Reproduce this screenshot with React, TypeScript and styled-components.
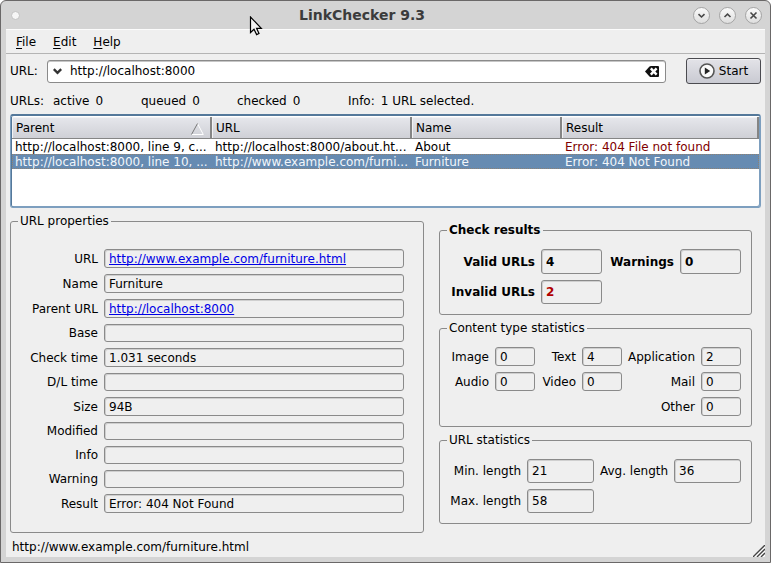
import React from "react";
import styled, { createGlobalStyle, css } from "styled-components";

const line = "#8a8a8a";

const GlobalStyle = createGlobalStyle`
  * { box-sizing: border-box; }
  body {
    margin: 0;
    background: #fff;
    color: #000;
    font: 12px/15px "DejaVu Sans", Verdana, sans-serif;
  }
  input, button { font: inherit; color: inherit; }
`;

const Window = styled.div`
  display: flex;
  flex-direction: column;
  min-height: 100vh;
  padding: 0 5px 5px;
  border: 1px solid #6a6868;
  border-radius: 6px 6px 0 0;
  background: #d4d4d4;
`;

const TitleBar = styled.header`
  display: grid;
  grid-template-columns: 20px 1fr auto;
  align-items: center;
  height: 28px;
  padding: 0 3px 0 5px;
`;

const Title = styled.h1`
  margin: 0;
  color: #3c3c3c;
  font-size: 14px;
  line-height: 17px;
  text-align: center;
`;

const Dot = styled.span`
  width: 9px;
  height: 9px;
  border: 1px solid #c2c2c2;
  border-radius: 50%;
  background: #f6f6f6;
`;

const WindowButtons = styled.div`
  display: flex;
  justify-content: flex-end;
  gap: 9px;
`;

const RoundButton = styled.button`
  display: grid;
  place-items: center;
  width: 17px;
  height: 17px;
  padding: 0;
  border: 1px solid #a4a4a4;
  border-radius: 50%;
  background: linear-gradient(#fafafa, #dedede);
`;

const Content = styled.main`
  display: flex;
  flex: 1;
  flex-direction: column;
  background: #efefef;
`;

const MenuBar = styled.nav`
  display: flex;
  gap: 17px;
  height: 25px;
  padding: 1px 10px 0;
  border-top: 1px solid #fcfcfc;
  border-bottom: 1px solid #b4b4b4;
`;

const MenuItem = styled.button`
  padding: 0;
  border: 0;
  background: none;

  &::first-letter {
    text-decoration: underline;
    text-underline-offset: 2px;
  }
`;

const UrlBar = styled.form`
  display: flex;
  align-items: center;
  padding: 4px 4px 0;
`;

const UrlLabel = styled.label`
  width: 37px;
`;

const Combo = styled.div`
  display: flex;
  flex: 1;
  align-items: center;
  height: 23px;
  margin-right: 20px;
  padding: 0 5px;
  border: 1px solid ${line};
  border-radius: 3px;
  background: #fff;
  box-shadow: inset 0 1px #c6c6c6;
`;

const ComboInput = styled.input`
  flex: 1;
  min-width: 0;
  padding: 0 8px;
  border: 0;
  outline: 0;
  background: none;
`;

const IconButton = styled.button`
  display: flex;
  padding: 0;
  border: 0;
  background: none;
`;

const StartButton = styled.button`
  display: flex;
  align-items: center;
  justify-content: center;
  gap: 4px;
  width: 75px;
  height: 26px;
  padding: 0;
  border: 1px solid #4b4b50;
  border-radius: 3px;
  background: linear-gradient(#e3e3e8, #c9cad2);
  box-shadow: inset 0 1px #f1f1f4;
`;

const Counters = styled.div`
  display: flex;
  padding: 10px 4px 5px;
`;

const Counter = styled.span<{ $width?: number }>`
  display: flex;
  gap: 6px;
  width: ${(p) => (p.$width ? `${p.$width}px` : "auto")};
  white-space: nowrap;
`;

const ResultList = styled.div`
  height: 94px;
  margin: 0 4px;
  padding-top: 1px;
  border: 1px solid #7d9fbf;
  border-top: 2px solid #54789a;
  border-radius: 3px;
  background: #fff;
  box-shadow: inset 1px 0 #54789a, inset -1px -1px #7d9fbf;
`;

const Table = styled.table`
  width: calc(100% - 2px);
  margin: 0 1px;
  border-collapse: separate;
  border-spacing: 0;
  table-layout: fixed;
`;

const HeadCell = styled.th<{ $width?: number }>`
  width: ${(p) => (p.$width ? `${p.$width}px` : "auto")};
  height: 22px;
  padding: 2px 4px 0;
  border-right: 2px solid #858585;
  border-bottom: 1px solid #858585;
  background: linear-gradient(#e6e7ec, #cfd0d6);
  box-shadow: inset 1px 1px #f2f2f4;
  font-weight: normal;
  text-align: left;
`;

const HeadRow = styled.span`
  display: flex;
  align-items: center;
  justify-content: space-between;
  padding-right: 2px;
`;

const Row = styled.tr<{ $selected?: boolean }>`
  height: 15px;
  ${(p) =>
    p.$selected &&
    css`
      background: #668bb2;
      color: #f2f6fa;
      outline: 1px dotted #8f8172;
      outline-offset: -1px;
    `}
`;

const Cell = styled.td<{ $error?: boolean }>`
  height: 15px;
  padding: 2px 0 0 3px;
  overflow: hidden;
  color: ${(p) => (p.$error ? "#800000" : "inherit")};
  line-height: 13px;
  white-space: nowrap;
`;

const Panels = styled.div`
  display: grid;
  grid-template-columns: 414fr 313fr;
  align-items: start;
  column-gap: 15px;
  padding: 6px 13px 0 4px;
`;

const Stack = styled.div`
  display: flex;
  flex-direction: column;
  gap: 6px;
  padding-top: 9px;
`;

const Group = styled.fieldset<{ $strong?: boolean }>`
  min-width: 0;
  margin: 0;
  padding: 0 7px;
  border: 1px solid ${line};
  border-radius: 3px;
  font-weight: ${(p) => (p.$strong ? "bold" : "normal")};
`;

const Legend = styled.legend`
  padding: 0 2px;
`;

const Properties = styled.div`
  display: grid;
  grid-template-columns: 80px 1fr;
  gap: 6px;
  padding: 20px 12px 19px 0;
`;

const Stats = styled.div<{ $columns: string }>`
  display: grid;
  grid-template-columns: ${(p) => p.$columns};
  gap: 6px;
  padding: 11px 3px 10px 2px;
`;

const FieldLabel = styled.label<{ $column?: number }>`
  align-self: center;
  grid-column: ${(p) => p.$column ?? "auto"};
  line-height: 18px;
  text-align: right;
  white-space: nowrap;
`;

const fieldBox = css<{ $height: number }>`
  width: 100%;
  min-width: 0;
  height: ${(p) => p.$height}px;
  padding: 0 4px;
  border: 1px solid ${line};
  border-radius: 3px;
  background: #efefef;
  box-shadow: inset 1px 1px #cfcfcf;
`;

const Field = styled.input<{ $height: number; $alert?: boolean }>`
  ${fieldBox}
  color: ${(p) => (p.$alert ? "#b00000" : "inherit")};
  font-weight: inherit;
  outline: 0;
`;

const LinkField = styled.div<{ $height: number }>`
  ${fieldBox}
  line-height: 18px;
`;

const Link = styled.a`
  color: #0000e6;
  text-decoration: underline;
  text-decoration-skip-ink: none;
  text-underline-offset: 1px;
`;

const StatusBar = styled.footer`
  display: flex;
  flex: 1;
  align-items: flex-end;
  justify-content: space-between;
  padding-left: 6px;
`;

const StatusText = styled.span`
  padding: 7px 0 2px;
`;

const PointerIcon = styled.svg`
  position: absolute;
  top: 16px;
  left: 249px;
`;

const WindowGlyph = ({ d }: { d: string }) => (
  <svg width="9" height="9" viewBox="0 0 9 9" fill="none" stroke="#474747" strokeWidth="1.6">
    <path d={d} />
  </svg>
);

const properties = [
  { label: "URL", value: "http://www.example.com/furniture.html", link: true },
  { label: "Name", value: "Furniture" },
  { label: "Parent URL", value: "http://localhost:8000", link: true },
  { label: "Base", value: "" },
  { label: "Check time", value: "1.031 seconds" },
  { label: "D/L time", value: "" },
  { label: "Size", value: "94B" },
  { label: "Modified", value: "" },
  { label: "Info", value: "" },
  { label: "Warning", value: "" },
  { label: "Result", value: "Error: 404 Not Found" },
];

type StatProps = { label: string; value: string; height: number; column?: number; alert?: boolean };

const Stat = ({ label, value, height, column, alert }: StatProps) => {
  const id = React.useId();
  return (
    <>
      <FieldLabel htmlFor={id} $column={column}>{label}</FieldLabel>
      <Field id={id} readOnly value={value} $height={height} $alert={alert} />
    </>
  );
};

export default function App() {
  return (
    <>
      <GlobalStyle />
      <Window>
        <TitleBar>
          <Dot />
          <Title>LinkChecker 9.3</Title>
          <WindowButtons>
            <RoundButton aria-label="Minimize"><WindowGlyph d="M1.5 3.2 4.5 6 7.5 3.2" /></RoundButton>
            <RoundButton aria-label="Maximize"><WindowGlyph d="M1.5 6 4.5 3.2 7.5 6" /></RoundButton>
            <RoundButton aria-label="Close"><WindowGlyph d="M1.5 1.5 7.5 7.5M7.5 1.5 1.5 7.5" /></RoundButton>
          </WindowButtons>
        </TitleBar>
        <Content>
          <MenuBar>
            <MenuItem>File</MenuItem>
            <MenuItem>Edit</MenuItem>
            <MenuItem>Help</MenuItem>
          </MenuBar>
          <UrlBar onSubmit={(e) => e.preventDefault()}>
            <UrlLabel htmlFor="url">URL:</UrlLabel>
            <Combo>
              <IconButton type="button" aria-label="Recent URLs">
                <svg width="9" height="7" viewBox="0 0 9 7" fill="none" stroke="#333" strokeWidth="2.4">
                  <path d="M.8 1.2 4.5 4.9 8.2 1.2" />
                </svg>
              </IconButton>
              <ComboInput id="url" defaultValue="http://localhost:8000" />
              <IconButton type="button" aria-label="Clear">
                <svg width="15" height="11" viewBox="0 0 15 11">
                  <path d="M0 5.5 4.5.5Q5 0 6 0H13Q14 0 14 1V10Q14 11 13 11H6Q5 11 4.5 10.5Z" fill="#111" />
                  <path d="M5.8 2.4 11.6 8.6M11.6 2.4 5.8 8.6" stroke="#fff" strokeWidth="2.4" />
                </svg>
              </IconButton>
            </Combo>
            <StartButton type="submit">
              <svg width="16" height="16" viewBox="0 0 16 16">
                <circle cx="8" cy="8" r="7" fill="#fafafa" stroke="#555" strokeWidth="1.6" />
                <path d="M5.8 4.6V11.4L11.2 8Z" fill="#222" />
              </svg>
              Start
            </StartButton>
          </UrlBar>
          <Counters>
            <Counter $width={43}>URLs:</Counter>
            <Counter $width={88}><span>active</span><span>0</span></Counter>
            <Counter $width={96}><span>queued</span><span>0</span></Counter>
            <Counter $width={111}><span>checked</span><span>0</span></Counter>
            <Counter><span>Info:</span><span>1 URL selected.</span></Counter>
          </Counters>
          <ResultList>
            <Table>
              <thead>
                <tr>
                  <HeadCell $width={200}>
                    <HeadRow>
                      Parent
                      <svg width="13" height="12" viewBox="0 0 13 12" fill="none">
                        <path d="M6.5.5 12.3 11.5H.5" stroke="#fff" />
                        <path d="M.5 11.5 6.5.5" stroke="#777" />
                      </svg>
                    </HeadRow>
                  </HeadCell>
                  <HeadCell $width={200}>URL</HeadCell>
                  <HeadCell $width={150}>Name</HeadCell>
                  <HeadCell>Result</HeadCell>
                </tr>
              </thead>
              <tbody>
                <Row>
                  <Cell>http://localhost:8000, line 9, c...</Cell>
                  <Cell>http://localhost:8000/about.ht...</Cell>
                  <Cell>About</Cell>
                  <Cell $error>Error: 404 File not found</Cell>
                </Row>
                <Row $selected>
                  <Cell>http://localhost:8000, line 10, ...</Cell>
                  <Cell>http://www.example.com/furni...</Cell>
                  <Cell>Furniture</Cell>
                  <Cell>Error: 404 Not Found</Cell>
                </Row>
              </tbody>
            </Table>
          </ResultList>
          <Panels>
            <Group>
              <Legend>URL properties</Legend>
              <Properties>
                {properties.map(({ label, value, link }) =>
                  link ? (
                    <React.Fragment key={label}>
                      <FieldLabel as="span">{label}</FieldLabel>
                      <LinkField $height={19}><Link href={value}>{value}</Link></LinkField>
                    </React.Fragment>
                  ) : (
                    <Stat key={label} label={label} value={value} height={value ? 19 : 18} />
                  )
                )}
              </Properties>
            </Group>
            <Stack>
              <Group $strong>
                <Legend>Check results</Legend>
                <Stats $columns="86px 1fr 66px 1fr">
                  <Stat label="Valid URLs" value="4" height={25} />
                  <Stat label="Warnings" value="0" height={25} />
                  <Stat label="Invalid URLs" value="2" height={24} alert />
                </Stats>
              </Group>
              <Group>
                <Legend>Content type statistics</Legend>
                <Stats $columns="40px 1fr 35px 1fr 67px 1fr">
                  <Stat label="Image" value="0" height={19} />
                  <Stat label="Text" value="4" height={19} />
                  <Stat label="Application" value="2" height={19} />
                  <Stat label="Audio" value="0" height={19} />
                  <Stat label="Video" value="0" height={19} />
                  <Stat label="Mail" value="0" height={19} />
                  <Stat label="Other" value="0" height={19} column={5} />
                </Stats>
              </Group>
              <Group>
                <Legend>URL statistics</Legend>
                <Stats $columns="72px 1fr 68px 1fr">
                  <Stat label="Min. length" value="21" height={24} />
                  <Stat label="Avg. length" value="36" height={24} />
                  <Stat label="Max. length" value="58" height={24} />
                </Stats>
              </Group>
            </Stack>
          </Panels>
          <StatusBar>
            <StatusText>http://www.example.com/furniture.html</StatusText>
            <svg width="12" height="12" viewBox="0 0 12 12" stroke="#444" strokeWidth="1.3">
              <path d="M0 12 12 0M4 12 12 4M8 12 12 8" />
              <path d="M2 12 12 2M6 12 12 6M10 12 12 10" stroke="#fff" strokeWidth="1" />
            </svg>
          </StatusBar>
        </Content>
      </Window>
      <PointerIcon width="14" height="20" viewBox="0 0 14 20">
        <path d="M1.5 1V16.5L5 13.2 7.6 18.6 10 17.5 7.6 12.3H12.3Z" fill="#f4f4f4" stroke="#000" strokeWidth="1.2" />
      </PointerIcon>
    </>
  );
}
